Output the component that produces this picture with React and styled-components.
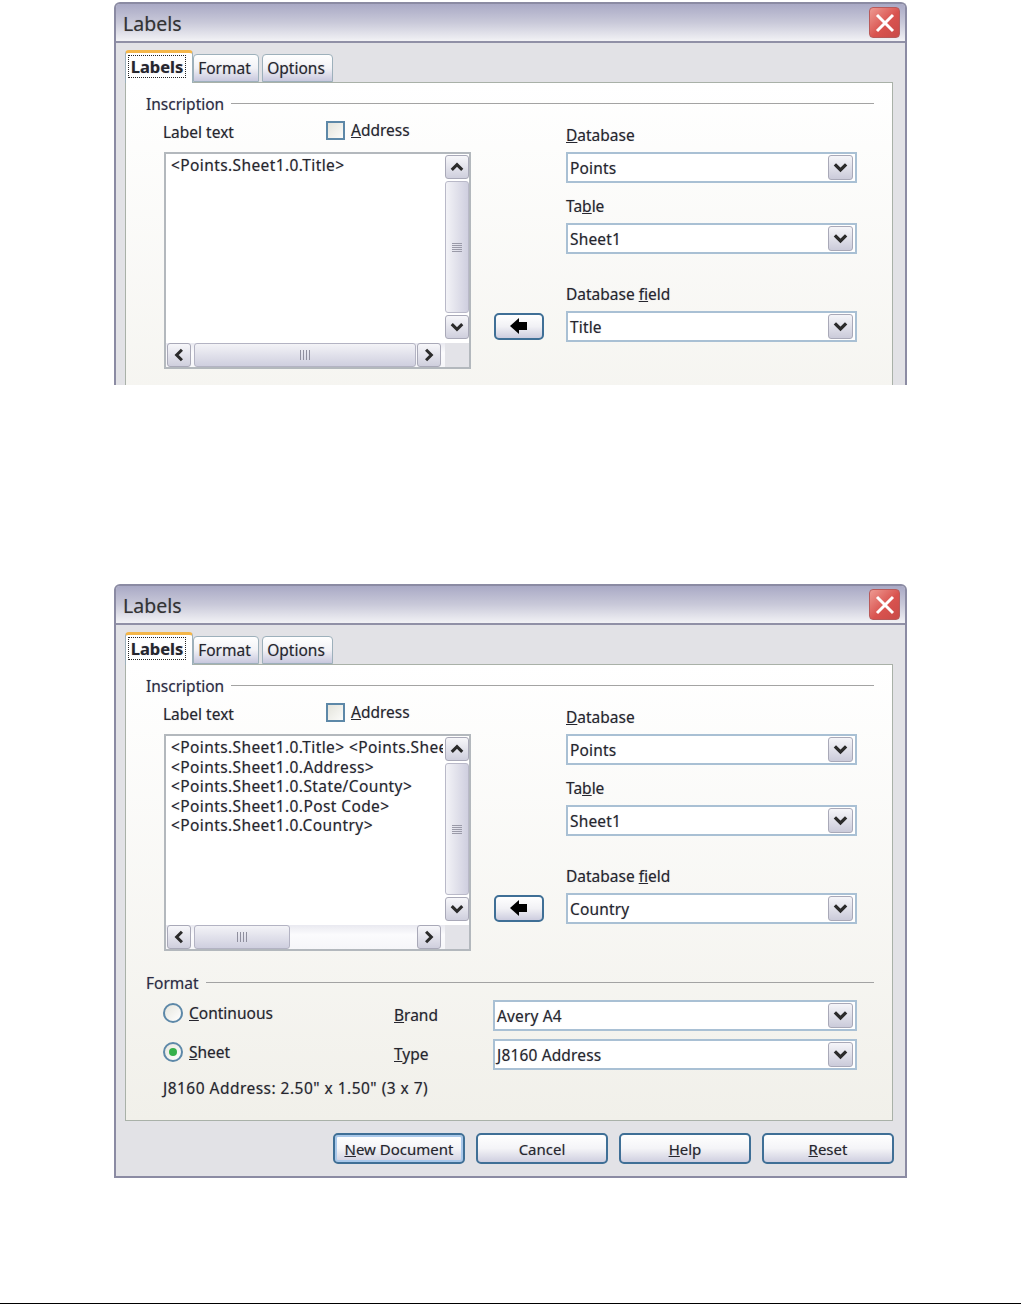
import React from "react";
import styled, { createGlobalStyle } from "styled-components";

const GlobalStyle = createGlobalStyle`
  html, body {
    margin: 0;
    padding: 0;
    background: #fff;
  }
`;

const Page = styled.div`
  display: flex;
  flex-direction: column;
  min-height: 1304px;
  padding-top: 2px;
  box-sizing: border-box;
  font-family: "Noto Sans", "Liberation Sans", sans-serif;
  font-size: 15.5px;
  color: #26262e;
  text-shadow: 0 0 1px rgba(40, 40, 70, 0.35);
`;

const Frame = styled.section`
  box-sizing: border-box;
  width: 793px;
  margin-left: 114px;
  margin-top: ${(p) => p.$top || 0}px;
  height: ${(p) => p.$height}px;
  overflow: hidden;
  background: #e2e2e6;
  border: 2px solid #8b8ba3;
  border-bottom: ${(p) => (p.$cropped ? "0" : "2px solid #8b8ba3")};
  border-radius: 6px 6px 0 0;
`;

const TitleBar = styled.header`
  box-sizing: border-box;
  height: 39px;
  display: flex;
  align-items: center;
  justify-content: space-between;
  padding: 0 5px 0 7px;
  background: linear-gradient(#a9a9c5, #c9c9d9 50%, #f2f2f5);
  border-bottom: 2px solid #9090a6;
  font-size: 19.5px;
  color: #333;
`;

const TitleText = styled.span`
  margin-top: 1px;
`;

const CloseButton = styled.span`
  display: flex;
  align-items: center;
  justify-content: center;
  width: 31px;
  height: 31px;
  border-radius: 4px;
  border: 1px solid #b85a5a;
  box-sizing: border-box;
  background: linear-gradient(135deg, #ee9a92, #d9534f 55%, #c94a48);
`;

const Body = styled.div`
  padding: 7px 12px 0 9px;
`;

const TabRow = styled.div`
  display: flex;
  align-items: flex-end;
  height: 32px;
  position: relative;
  z-index: 1;
`;

const Tab = styled.div`
  box-sizing: border-box;
  width: ${(p) => p.$width}px;
  margin-right: ${(p) => p.$gap || 0}px;
  margin-bottom: ${(p) => (p.$active ? -1 : 0)}px;
  height: ${(p) => (p.$active ? 33 : 28)}px;
  display: flex;
  align-items: center;
  justify-content: ${(p) => (p.$active ? "flex-start" : "center")};
  padding: ${(p) => (p.$active ? "0 0 0 2px" : "0 3px 0 0")};
  border: 1px solid #9db0bb;
  border-bottom: ${(p) => (p.$active ? "0" : "1px solid #9db0bb")};
  border-top: ${(p) => (p.$active ? "3px solid #f4b64a" : "1px solid #9db0bb")};
  border-radius: 4px 4px 0 0;
  background: ${(p) => (p.$active ? "#fff" : "linear-gradient(#fff, #f2f2f6 50%, #c8c8de)")};
  font-weight: ${(p) => (p.$active ? 700 : 400)};
  font-size: ${(p) => (p.$active ? 16.5 : 15.5)}px;
`;

const FocusText = styled.span`
  box-sizing: border-box;
  width: 58px;
  height: 23px;
  margin-bottom: 3px;
  border: 1px dotted #222;
  text-align: center;
  line-height: 21px;
`;

const Panel = styled.div`
  box-sizing: border-box;
  width: 768px;
  height: 457px;
  padding: 11px 18px 0 20px;
  border: 1px solid #a9b1a8;
  background: linear-gradient(#fff, #f1f0ea);
`;

const Legend = styled.div`
  display: flex;
  align-items: center;
  gap: 7px;
  height: 20px;
  color: #2c2c44;

  &::after {
    content: "";
    flex: 1;
    height: 1px;
    margin-bottom: 2px;
    background: #a3a3a3;
  }
`;

const Columns = styled.div`
  display: flex;
`;

const LeftColumn = styled.div`
  width: 325px;
`;

const LabelRow = styled.div`
  display: flex;
  height: 38px;
  padding-left: 17px;
  box-sizing: border-box;
`;

const LabelText = styled.div`
  width: 163px;
  margin-top: 8px;
  line-height: 20px;
`;

const Check = styled.span`
  box-sizing: border-box;
  width: 19px;
  height: 19px;
  margin: 7px 6px 0 0;
  border: 2px solid #5d88a8;
  background: linear-gradient(135deg, #e4e4dc, #fbfbf9);
`;

const CheckLabel = styled.div`
  margin-top: 6px;
  line-height: 20px;
`;

const ListBox = styled.div`
  box-sizing: border-box;
  width: 307px;
  height: 217px;
  margin-left: 18px;
  display: grid;
  grid-template-columns: 279px 24px;
  grid-template-rows: 189px 24px;
  border: 2px solid #b3b8bd;
  background: #fff;
`;

const ListText = styled.div`
  margin: 2px 2px 0 5px;
  overflow: hidden;
  white-space: pre;
  line-height: 19.6px;
  letter-spacing: 0.4px;
`;

const VerticalBar = styled.div`
  display: flex;
  flex-direction: column;
  gap: 2px;
  padding: 1px 0 4px;
  box-sizing: border-box;
`;

const HorizontalBar = styled.div`
  display: flex;
  align-items: stretch;
  padding: 0 4px 0 1px;
  background: linear-gradient(#e9e9f0, #fbfbfd 40%, #f6f6f9);
`;

const Corner = styled.div`
  background: #e3e3e8;
`;

const ArrowButton = styled.span`
  box-sizing: border-box;
  flex: none;
  display: flex;
  align-items: center;
  justify-content: center;
  width: 24px;
  height: 24px;
  border: 1px solid #a9a9b8;
  border-radius: 3px;
  background: linear-gradient(#f7f7fa, #cfcfdd);
`;

const VerticalThumb = styled.div`
  flex: 1;
  display: flex;
  align-items: center;
  justify-content: center;
  border: 1px solid #b9b9c8;
  border-radius: 3px;
  background: linear-gradient(90deg, #f3f3f7, #cfcfdf);

  &::after {
    content: "";
    width: 10px;
    height: 9px;
    background: repeating-linear-gradient(#9a9aa8 0 1px, transparent 1px 2px);
  }
`;

const HorizontalThumb = styled.div`
  box-sizing: border-box;
  width: ${(p) => p.$width}px;
  margin: 0 auto 0 3px;
  display: flex;
  align-items: center;
  justify-content: center;
  border: 1px solid #b3b3c3;
  border-radius: 3px;
  background: linear-gradient(#f3f3f7, #cfcfdf);

  &::after {
    content: "";
    width: 11px;
    height: 10px;
    background: repeating-linear-gradient(90deg, #8f8f9e 0 1px, transparent 1px 3px);
  }
`;

const MoveColumn = styled.div`
  margin: 199px 22px 0 23px;
`;

const MoveButton = styled.span`
  box-sizing: border-box;
  display: flex;
  align-items: center;
  justify-content: center;
  width: 50px;
  height: 27px;
  padding-bottom: 2px;
  border: 2px solid #3f6f96;
  border-radius: 5px;
  background: linear-gradient(#fff, #f1f1f5 50%, #cdcddf);
`;

const RightColumn = styled.div`
  padding-top: 11px;
  display: flex;
  flex-direction: column;
`;

const FieldLabel = styled.div`
  line-height: 20px;
  margin-top: ${(p) => p.$top || 0}px;
  margin-bottom: 7px;
`;

const Combo = styled.div`
  box-sizing: border-box;
  width: ${(p) => p.$width}px;
  height: 31px;
  display: flex;
  align-items: center;
  justify-content: space-between;
  padding: 0 2px;
  border: 2px solid #a9c0d4;
  background: #fff;
  letter-spacing: 0.15px;
`;

const ComboButton = styled.span`
  box-sizing: border-box;
  display: flex;
  align-items: center;
  justify-content: center;
  width: 25px;
  height: 25px;
  border: 1px solid #a9a9b8;
  border-radius: 3px;
  background: linear-gradient(#f5f5f9, #cbcbda);
`;

const FormatSection = styled.div`
  margin-top: 22px;
`;

const FormatGrid = styled.div`
  display: grid;
  grid-template-columns: 231px 99px 364px;
  grid-auto-rows: 31px;
  row-gap: 8px;
  align-items: center;
  margin-top: 7px;
  padding-left: 17px;
`;

const RadioRow = styled.div`
  display: flex;
  align-items: center;
  gap: 6px;
  margin-bottom: 6px;
`;

const Radio = styled.span`
  box-sizing: border-box;
  width: 20px;
  height: 20px;
  display: flex;
  align-items: center;
  justify-content: center;
  border: 2px solid #5d88a8;
  border-radius: 50%;
  background: linear-gradient(135deg, #e6e6de, #fff);

  &::after {
    content: "";
    display: ${(p) => (p.$checked ? "block" : "none")};
    width: 8px;
    height: 8px;
    border-radius: 50%;
    background: #35b04a;
  }
`;

const GridLabel = styled.span`
  margin-bottom: 2px;
`;

const Description = styled.div`
  margin: 8px 0 0 17px;
  line-height: 20px;
  letter-spacing: 0.47px;
`;

const ButtonRow = styled.div`
  display: flex;
  justify-content: flex-end;
  gap: 11px;
  width: 769px;
  margin-top: 12px;
`;

const ActionButton = styled.span`
  box-sizing: border-box;
  width: 132px;
  height: 31px;
  display: flex;
  align-items: center;
  justify-content: center;
  border: 2px solid #3f6f96;
  border-radius: 5px;
  background: linear-gradient(#fff, #f4f4f7 50%, #cfcfe0);
  box-shadow: ${(p) => (p.$focused ? "inset 0 0 0 2px #a9c8ea" : "none")};
  font-size: 15px;
`;

const Rule = styled.div`
  height: 1px;
  margin-top: auto;
  background: #000;
`;

const CHEVRONS = {
  up: "M1.5 8.5 L6 4 L10.5 8.5",
  down: "M1.5 3.5 L6 8 L10.5 3.5",
  left: "M8.5 1.5 L4 6 L8.5 10.5",
  right: "M3.5 1.5 L8 6 L3.5 10.5",
};

function Chevron({ dir, size = 14 }) {
  return (
    <svg width={size} height={size} viewBox="0 0 12 12" fill="none">
      <path d={CHEVRONS[dir]} stroke="#2b2b2b" strokeWidth="2.6" />
    </svg>
  );
}

function CloseIcon() {
  return (
    <svg width="20" height="20" viewBox="0 0 20 20">
      <path d="M2 2 L18 18 M18 2 L2 18" stroke="#fff" strokeWidth="3" />
    </svg>
  );
}

function LeftArrow() {
  return (
    <svg width="18" height="16" viewBox="0 0 18 16">
      <path d="M0 8 L9 0 V4 H17 V12 H9 V16 Z" fill="#000" />
    </svg>
  );
}

function ComboBox({ value, width = 291 }) {
  return (
    <Combo $width={width}>
      {value}
      <ComboButton>
        <Chevron dir="down" size={15} />
      </ComboButton>
    </Combo>
  );
}

function Dialog({ lines, field, thumb, top, height, cropped, children }) {
  return (
    <Frame $top={top} $height={height} $cropped={cropped}>
      <TitleBar>
        <TitleText>Labels</TitleText>
        <CloseButton>
          <CloseIcon />
        </CloseButton>
      </TitleBar>
      <Body>
        <TabRow>
          <Tab $active $width={68}>
            <FocusText>Labels</FocusText>
          </Tab>
          <Tab $width={66} $gap={3}>Format</Tab>
          <Tab $width={71}>Options</Tab>
        </TabRow>
        <Panel>
          <Legend>Inscription</Legend>
          <Columns>
            <LeftColumn>
              <LabelRow>
                <LabelText>Label text</LabelText>
                <Check />
                <CheckLabel><u>A</u>ddress</CheckLabel>
              </LabelRow>
              <ListBox>
                <ListText>{lines.join("\n")}</ListText>
                <VerticalBar>
                  <ArrowButton><Chevron dir="up" /></ArrowButton>
                  <VerticalThumb />
                  <ArrowButton><Chevron dir="down" /></ArrowButton>
                </VerticalBar>
                <HorizontalBar>
                  <ArrowButton><Chevron dir="left" /></ArrowButton>
                  <HorizontalThumb $width={thumb} />
                  <ArrowButton><Chevron dir="right" /></ArrowButton>
                </HorizontalBar>
                <Corner />
              </ListBox>
            </LeftColumn>
            <MoveColumn>
              <MoveButton><LeftArrow /></MoveButton>
            </MoveColumn>
            <RightColumn>
              <FieldLabel><u>D</u>atabase</FieldLabel>
              <ComboBox value="Points" />
              <FieldLabel $top={13}>Ta<u>b</u>le</FieldLabel>
              <ComboBox value="Sheet1" />
              <FieldLabel $top={30}>Database <u>f</u>ield</FieldLabel>
              <ComboBox value={field} />
            </RightColumn>
          </Columns>
          {children}
        </Panel>
        {!cropped && (
          <ButtonRow>
            <ActionButton $focused><span><u>N</u>ew Document</span></ActionButton>
            <ActionButton>Cancel</ActionButton>
            <ActionButton><span><u>H</u>elp</span></ActionButton>
            <ActionButton><span><u>R</u>eset</span></ActionButton>
          </ButtonRow>
        )}
      </Body>
    </Frame>
  );
}

export default function App() {
  return (
    <Page>
      <GlobalStyle />
      <Dialog
        lines={["<Points.Sheet1.0.Title>"]}
        field="Title"
        thumb={222}
        height={383}
        cropped
      />
      <Dialog
        lines={[
          "<Points.Sheet1.0.Title> <Points.Sheet1.0.Address>",
          "<Points.Sheet1.0.Address>",
          "<Points.Sheet1.0.State/County>",
          "<Points.Sheet1.0.Post Code>",
          "<Points.Sheet1.0.Country>",
        ]}
        field="Country"
        thumb={96}
        top={199}
        height={594}
      >
        <FormatSection>
          <Legend>Format</Legend>
          <FormatGrid>
            <RadioRow><Radio /><span><u>C</u>ontinuous</span></RadioRow>
            <GridLabel><u>B</u>rand</GridLabel>
            <ComboBox value="Avery A4" width={364} />
            <RadioRow><Radio $checked /><span><u>S</u>heet</span></RadioRow>
            <GridLabel><u>T</u>ype</GridLabel>
            <ComboBox value="J8160 Address" width={364} />
          </FormatGrid>
          <Description>J8160 Address: 2.50" x 1.50" (3 x 7)</Description>
        </FormatSection>
      </Dialog>
      <Rule />
    </Page>
  );
}
